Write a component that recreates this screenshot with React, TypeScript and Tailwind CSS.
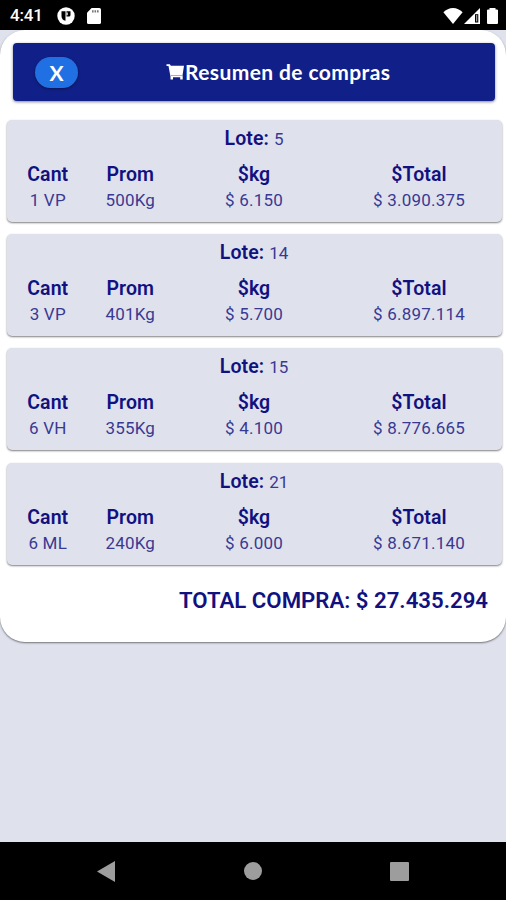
import React from 'react';

interface Lote {
  lote: number;
  cant: string;
  prom: string;
  kg: string;
  total: string;
}

const lotes: Lote[] = [
  { lote: 5, cant: '1 VP', prom: '500Kg', kg: '$ 6.150', total: '$ 3.090.375' },
  { lote: 14, cant: '3 VP', prom: '401Kg', kg: '$ 5.700', total: '$ 6.897.114' },
  { lote: 15, cant: '6 VH', prom: '355Kg', kg: '$ 4.100', total: '$ 8.776.665' },
  { lote: 21, cant: '6 ML', prom: '240Kg', kg: '$ 6.000', total: '$ 8.671.140' },
];

function StatusBar() {
  return (
    <div className="flex h-[30px] shrink-0 items-center bg-black pt-[1px] pr-[8px] pl-[10px] text-white">
      <span className="w-[33px] text-[17px] leading-none tracking-[-0.2px] whitespace-nowrap font-medium">4:41</span>
      <svg className="ml-[14px] h-[18px] w-[18px]" viewBox="0 0 18 18">
        <circle cx="9" cy="9" r="8.7" fill="white" />
        <path d="M4.500 4.200h4v9.600C6 13.500 4.500 11.500 4.500 9z" fill="black" />
        <path d="M9.500 4.200h4v3.900a1.500 1.500 0 0 1-1.500 1.500H9.500z" fill="black" />
        <path d="M9.500 5.600h1.200v2.600H9.500z" fill="white" />
      </svg>
      <svg className="ml-[12px] h-4 w-[14px]" viewBox="0 0 14 16">
        <path d="M4.6 0H12.4A1.6 1.6 0 0 1 14 1.6V14.4A1.6 1.6 0 0 1 12.4 16H1.6A1.6 1.6 0 0 1 0 14.4V4.8z" fill="white" />
        <path d="M5 2.200h1.600v2.300H5zM7.500 2.200h1.600v2.300H7.500zM10 2.200h1.600v2.300H10z" fill="#777" />
      </svg>
      <div className="flex-1" />
      <svg className="h-4 w-5" viewBox="0 0 20 16">
        <path d="M10 16L.4 4.300C3 1.700 6.300 0 10 0s7 1.700 9.600 4.300z" fill="white" />
      </svg>
      <svg className="ml-[1px] h-4 w-4" viewBox="0 0 16 16">
        <path d="M0 16L16 0V16z" fill="white" />
        <path d="M11 6.200h3.300V14.500H11z" fill="black" />
        <path d="M12 7h1.300V13.500H12z" fill="#999" />
      </svg>
      <svg className="ml-[7px] h-4 w-[11px]" viewBox="0 0 11 16">
        <path d="M2.500 0h6v1.500H10a1 1 0 0 1 1 1V15a1 1 0 0 1-1 1H1a1 1 0 0 1-1-1V2.500a1 1 0 0 1 1-1h1.500z" fill="white" />
      </svg>
    </div>
  );
}

function Header() {
  return (
    <div className="mr-[11px] ml-[13px] flex h-[58px] items-center rounded-[4px] bg-[#102088] pl-[22px] shadow-[0_1px_3px_rgba(0,0,60,0.5)]">
      <button className="flex h-[31px] w-[43px] items-center justify-center rounded-full bg-[#2170e3] font-['Lato','Open_Sans',sans-serif] text-[21px] leading-none font-bold text-white shadow-[0_1px_3px_rgba(0,0,0,0.4)]">
        X
      </button>
      <h1 className="ml-[88px] flex items-center pb-[1px] text-white">
        <svg className="h-4 w-[19px]" viewBox="0 0 19 16" fill="white">
          <path d="M.5.300h3.400l.9 1.500H18L16.500 11.500 16.700 12.500V15.500H14.200V13.300H7V15.500H4.500V12.500L3.900 9.500 2.500 2H.5z" />
          <path d="M4.900 11.200h11.400v.7H4.900z" fill="#7d86c0" />
        </svg>
        <span className="font-['Lato','Open_Sans',sans-serif] text-[21px] leading-none font-bold tracking-[0.4px] whitespace-nowrap">
          Resumen de compras
        </span>
      </h1>
    </div>
  );
}

function Column({ label, value, className }: { label: string; value: string; className?: string }) {
  return (
    <div className={className}>
      <div className="text-[19.500px] leading-[27px] font-semibold tracking-[0.1px]">{label}</div>
      <div className="text-[17px] leading-[25px] tracking-[0.2px] text-[#3a3992]">{value}</div>
    </div>
  );
}

function LoteCard({ item }: { item: Lote }) {
  return (
    <div className="h-[102px] rounded-[5px] bg-[#dfe2ed] pt-[5px] text-center shadow-[0_1px_2px_rgba(0,0,0,0.5)]">
      <div className="h-9 leading-[28px]">
        <span className="text-[19.500px] font-semibold tracking-[0.1px]">Lote: </span>
        <span className="text-[17px] text-[#3a3992]">{item.lote}</span>
      </div>
      <div className="grid grid-cols-6">
        <Column label="Cant" value={item.cant} />
        <Column label="Prom" value={item.prom} />
        <Column label="$kg" value={item.kg} className="col-span-2" />
        <Column label="$Total" value={item.total} className="col-span-2" />
      </div>
    </div>
  );
}

function NavBar() {
  return (
    <div className="flex h-[58px] shrink-0 items-center justify-between bg-black pr-[97px] pl-[97px]">
      <svg className="h-[21px] w-[18px]" viewBox="0 0 18 21" fill="#9d9d9d">
        <path d="M0 10.500L18 0V21z" />
      </svg>
      <div className="h-[18px] w-[18px] rounded-full bg-[#9d9d9d]" />
      <div className="h-[19px] w-[19px] rounded-[1px] bg-[#9d9d9d]" />
    </div>
  );
}

export default function App() {
  return (
    <div className="flex h-[900px] w-[506px] flex-col overflow-hidden bg-[#dfe2ed] font-['Roboto',sans-serif] text-[#11117f]">
      <StatusBar />
      <main className="h-[612px] rounded-[25px] bg-white pt-[13px] shadow-[0_1px_2px_rgba(0,0,0,0.5)]">
        <Header />
        <div className="mt-[19px] mr-[4.500px] ml-[6.500px] flex flex-col gap-[12.200px]">
          {lotes.map((item) => (
            <LoteCard key={item.lote} item={item} />
          ))}
        </div>
        <div className="mt-[20px] pr-[18px] text-right text-[22.200px] leading-[30px] font-semibold whitespace-nowrap">
          TOTAL COMPRA: $ 27.435.294
        </div>
      </main>
      <div className="flex-1" />
      <NavBar />
    </div>
  );
}
